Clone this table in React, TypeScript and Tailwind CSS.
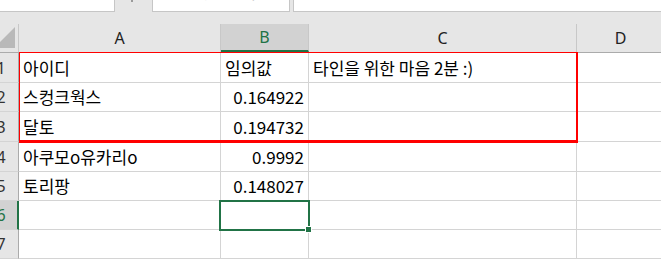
import React from "react";

const cols = [
  { key: "A", w: "w-[202px]" },
  { key: "B", w: "w-[88px]" },
  { key: "C", w: "w-[268px]" },
  { key: "D", w: "w-[88px]" },
];

const rowHeights = [
  "h-[30px]",
  "h-[29px]",
  "h-[30px]",
  "h-[30px]",
  "h-[29px]",
  "h-[29px]",
  "h-[29px]",
];

const data: Record<number, { a?: string; b?: string; c?: string }> = {
  1: { a: "아이디", b: "임의값", c: "타인을 위한 마음 2분 :)" },
  2: { a: "스컹크웍스", b: "0.164922" },
  3: { a: "달토", b: "0.194732" },
  4: { a: "아쿠모o유카리o", b: "0.9992" },
  5: { a: "토리팡", b: "0.148027" },
};

const isNum = (v?: string) => !!v && /^[0-9.]+$/.test(v);

const App = () => {
  return (
    <div className="w-[661px] h-[263px] overflow-hidden bg-white font-['Noto_Sans_CJK_KR','Noto_Sans',sans-serif] text-black">
      {/* formula bar, mostly scrolled out of view */}
      <div className="h-[24px] bg-[#e6e6e6] flex items-start">
        <div className="w-[115px] h-[12px] bg-white border-b border-r border-[#c6c6c6] overflow-hidden">
          <div className="mt-[-14px] ml-[-2px] text-[15px] leading-none text-[#333] font-['Noto_Sans',sans-serif]">
            B6
          </div>
        </div>
        <div className="w-[37px] h-[12px] flex justify-center">
          <div className="w-[2px] h-[2px] bg-[#9a9a9a] ml-[-3px]" />
        </div>
        <div className="w-[138px] h-[12px] bg-white border-b border-r border-l border-[#c6c6c6] overflow-hidden flex items-start gap-[26px] pl-[12px]">
          <span className="mt-[-13px] text-[14px] leading-none text-[#d0d0d0]">✕</span>
          <span className="mt-[-13px] text-[14px] leading-none text-[#d0d0d0]">✓</span>
          <span className="mt-[-13px] text-[14px] leading-none text-[#d0d0d0] ml-[14px] italic font-['Liberation_Serif',serif]">
            fx
          </span>
        </div>
        <div className="ml-[3px] flex-1 h-[12px] bg-white border-b border-l border-[#c6c6c6]" />
      </div>

      <div className="relative">
        {/* column headers */}
        <div className="flex h-[29px] bg-[#e6e6e6] border-b border-[#ababab] font-['Noto_Sans',sans-serif] text-[16px]">
          <div className="w-[19px] shrink-0 border-r border-[#c8c8c8] overflow-hidden">
            <svg width="19" height="28" className="block">
              <polygon points="15,3 15,24 -6,24" fill="#b9b9b9" />
            </svg>
          </div>
          {cols.map((c) => (
            <div
              key={c.key}
              className={`${c.w} shrink-0 border-r border-[#c8c8c8] flex items-center justify-center ${
                c.key === "B"
                  ? "bg-[#d2d2d2] text-[#217346] border-b-2 border-b-[#217346]"
                  : "text-[#222]"
              }`}
            >
              {c.key}
            </div>
          ))}
        </div>

        {/* rows */}
        {rowHeights.map((h, i) => {
          const r = i + 1;
          const d = data[r] || {};
          const sel = r === 6;
          return (
            <div key={r} className={`flex ${h}`}>
              <div
                className={`w-[19px] shrink-0 overflow-hidden border-b border-[#d4d4d4] ${
                  sel
                    ? "bg-[#d2d2d2] border-r-2 border-r-[#217346] text-[#217346]"
                    : "bg-[#e6e6e6] border-r border-r-[#ababab] text-[#333]"
                }`}
              >
                <div className="w-[34px] ml-[-16px] h-full flex items-center justify-center font-['Noto_Sans',sans-serif] text-[16px]">
                  {r}
                </div>
              </div>
              <div className="w-[202px] shrink-0 border-r border-b border-[#d4d4d4] flex items-center px-[4px] text-[17px] whitespace-nowrap">
                {d.a}
              </div>
              <div
                className={`w-[88px] shrink-0 border-r border-b border-[#d4d4d4] flex items-center px-[4px] text-[17px] whitespace-nowrap ${
                  isNum(d.b) ? "justify-end" : ""
                }`}
              >
                {d.b}
              </div>
              <div className="w-[268px] shrink-0 border-r border-b border-[#d4d4d4] flex items-center px-[4px] text-[17px] whitespace-nowrap">
                {d.c}
              </div>
              <div className="w-[88px] shrink-0 border-b border-[#d4d4d4]" />
            </div>
          );
        })}

        {/* red highlight box drawn over A1:C3 */}
        <div className="absolute left-[19px] top-[28px] w-[559px] h-[91px] border-t border-l border-r-2 border-b-[3px] border-[#f00] pointer-events-none" />

        {/* active cell B6 */}
        <div className="absolute left-[219px] top-[176px] w-[91px] h-[31px] border-2 border-[#217346] pointer-events-none">
          <div className="absolute right-[-4px] bottom-[-4px] w-[5px] h-[5px] bg-[#217346] border border-white box-content" />
        </div>
      </div>
    </div>
  );
};

export default App;
